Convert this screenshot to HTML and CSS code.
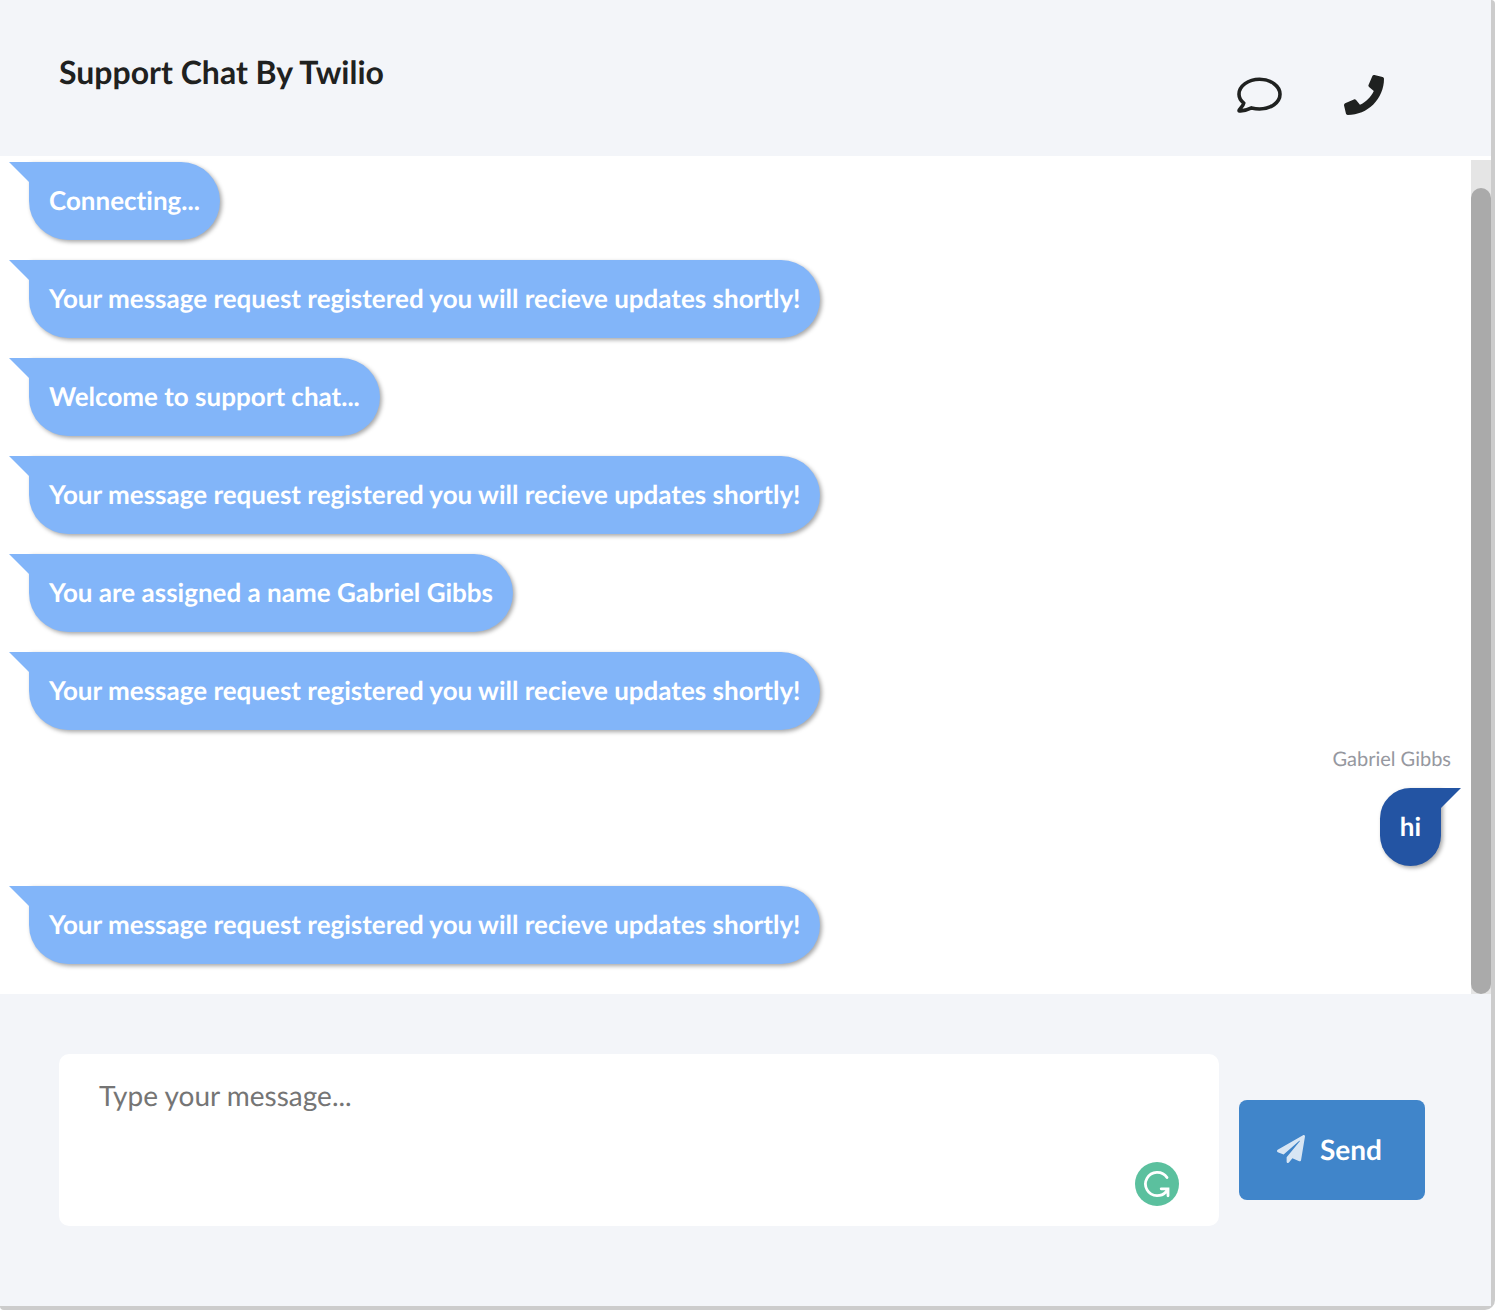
FILE: index.html
```html
<!DOCTYPE html>
<html lang="en">
<head>
<meta charset="utf-8">
<meta name="viewport" content="width=device-width, initial-scale=1">
<title>Support Chat</title>
<link rel="stylesheet" href="styles.css">
</head>
<body>
<main class="chat">
  <header class="chat-header">
    <h1 class="chat-title">Support Chat By Twilio</h1>
    <nav class="chat-actions">
      <button class="icon-button" type="button" aria-label="Message">
        <svg class="icon-comment" viewBox="0 0 45 36" fill="none" stroke="currentColor" stroke-width="3.6" stroke-linejoin="round"><path d="M22.500 2.300C11.300 2.300 2 8.900 2 17.200c0 3.500 1.700 6.400 4.800 8.900C6.300 29.600 2 32 2 33.400c0 .6.700.700 1.500.600C8 33.700 11 32.600 14.500 30.900c2.700.7 5.200 1.100 8 1.100C33.800 32 43 25.400 43 17.200S33.800 2.300 22.500 2.300z"/></svg>
      </button>
      <button class="icon-button" type="button" aria-label="Call">
        <svg class="icon-phone" viewBox="0 0 512 512" fill="currentColor"><path d="M493.400 24.600l-104-24c-11.300-2.600-22.900 3.300-27.500 13.900l-48 112c-4.200 9.800-1.400 21.300 6.900 28l60.600 49.600c-36 76.700-98.900 140.500-177.200 177.200l-49.600-60.600c-6.800-8.300-18.200-11.100-28-6.900l-112 48C3.900 366.500-2 378.100.6 389.400l24 104C27.100 504.200 36.700 512 48 512c256.100 0 464-207.500 464-464 0-11.200-7.700-20.900-18.600-23.400z"/></svg>
      </button>
    </nav>
  </header>

  <section class="chat-body">
    <ol class="messages">
      <li class="bubble received">Connecting...</li>
      <li class="bubble received">Your message request registered you will recieve updates shortly!</li>
      <li class="bubble received">Welcome to support chat...</li>
      <li class="bubble received">Your message request registered you will recieve updates shortly!</li>
      <li class="bubble received">You are assigned a name Gabriel Gibbs</li>
      <li class="bubble received">Your message request registered you will recieve updates shortly!</li>
      <li class="own">
        <span class="author">Gabriel Gibbs</span>
        <span class="bubble sent">hi</span>
      </li>
      <li class="bubble received">Your message request registered you will recieve updates shortly!</li>
    </ol>
    <div class="scroll-track"><div class="scroll-thumb"></div></div>
  </section>

  <form class="composer">
    <div class="field">
      <textarea class="input" placeholder="Type your message..." aria-label="Message"></textarea>
      <svg class="checker" viewBox="0 0 44 44" aria-hidden="true"><circle cx="22" cy="22" r="22" fill="#5bc09e"/><path d="M32 15.600A11.700 11.700 0 1 0 22 33.700c3.600 0 6.600-1.200 8.600-3.400L33 27.200M26.200 26.800h6.800v7" fill="none" stroke="#fff" stroke-width="2.800" stroke-linecap="round"/></svg>
    </div>
    <button class="send" type="submit">
      <svg class="icon-plane" viewBox="0 0 512 512" fill="currentColor"><path d="M476 3.200L12.500 270.600c-18.100 10.400-15.800 35.600 2.200 43.200L121 358.400l287.300-253.200c5.500-4.900 13.300 2.600 8.600 8.300L176 407v80.500c0 23.600 28.500 32.900 42.500 15.800L282 426l124.600 52.200c14.200 6 30.400-2.900 33-18.200l72-432C515 7.800 493.300-6.800 476 3.200z"/></svg>
      Send
    </button>
  </form>
</main>
</body>
</html>
```
FILE: styles.css
```css
* {
  box-sizing: border-box;
}

body {
  margin: 0;
  background: #fff;
  font-family: Lato, "Liberation Sans", sans-serif;
  font-variant-ligatures: none;
  text-rendering: geometricPrecision;
  color: #1f2120;
}

.chat {
  display: flex;
  flex-direction: column;
  margin-right: 6px;
  border: solid #ccc;
  border-width: 0 4px 4px 0;
  border-radius: 0 4px 10px 4px;
  background: #ccc;
}

.chat-header {
  display: flex;
  justify-content: space-between;
  align-items: flex-start;
  padding: 52px 107px 41px 59px;
  background: #f3f5f9;
}

.chat-title {
  margin: 0;
  font-size: 32px;
  line-height: 40px;
  font-weight: 700;
}

.chat-actions {
  display: flex;
  align-items: center;
  gap: 62px;
  padding-top: 23px;
}

.icon-button {
  display: flex;
  padding: 0;
  border: 0;
  background: none;
  color: inherit;
}

.icon-comment {
  width: 45px;
  height: 36px;
}

.icon-phone {
  width: 40px;
  height: 40px;
}

.chat-body {
  display: flex;
  padding-top: 4px;
  background: #fff;
}

.messages {
  flex: 1;
  display: flex;
  flex-direction: column;
  align-items: flex-start;
  gap: 20px;
  margin: 0;
  padding: 2px 30px 30px 29px;
  list-style: none;
}

.bubble {
  position: relative;
  padding: 19px 20px 21px;
  border-radius: 39px;
  box-shadow: 2px 2px 4px rgba(0, 0, 0, 0.35);
  color: #fff;
  font-size: 26px;
  line-height: 38px;
  font-weight: 700;
}

.bubble::before {
  content: "";
  position: absolute;
  top: 0;
  width: 40px;
  height: 20px;
  background: inherit;
}

.received {
  border-top-left-radius: 0;
  background: #82b5f9;
}

.received::before {
  left: -20px;
  clip-path: polygon(0 0, 100% 0, 100% 100%, 20px 100%);
}

.own {
  align-self: flex-end;
  display: flex;
  flex-direction: column;
  align-items: flex-end;
  gap: 20px;
}

.author {
  margin-right: -10px;
  color: #9698a0;
  font-size: 20px;
  line-height: 18px;
}

.sent {
  border-top-right-radius: 0;
  background: #2354a3;
}

.sent::before {
  right: -20px;
  clip-path: polygon(0 0, 100% 0, 20px 100%, 0 100%);
}

.scroll-track {
  width: 20px;
  padding-top: 28px;
  background: #e5e5e5;
}

.scroll-thumb {
  height: 100%;
  border-radius: 10px;
  background: #aaa;
}

.composer {
  display: flex;
  align-items: center;
  gap: 20px;
  padding: 60px 66px 80px 59px;
  background: #f3f5f9;
}

.field {
  position: relative;
  flex: 1;
  display: flex;
}

.input {
  flex: 1;
  height: 172px;
  padding: 20px 40px;
  border: 0;
  border-radius: 10px;
  background: #fff;
  color: inherit;
  font: 28px/42px Lato, "Liberation Sans", sans-serif;
  font-variant-ligatures: none;
  text-rendering: inherit;
  resize: none;
}

.input::placeholder {
  color: #757575;
}

.checker {
  position: absolute;
  right: 40px;
  bottom: 20px;
  width: 44px;
  height: 44px;
}

.send {
  display: flex;
  align-items: center;
  gap: 15px;
  margin-top: 20px;
  padding: 29px 43px 31px 38px;
  border: 0;
  border-radius: 8px;
  background: #4085ca;
  color: #fff;
  font: 700 28px/40px Lato, "Liberation Sans", sans-serif;
  text-rendering: inherit;
}

.icon-plane {
  width: 28px;
  height: 28px;
  opacity: 0.8;
}
```
